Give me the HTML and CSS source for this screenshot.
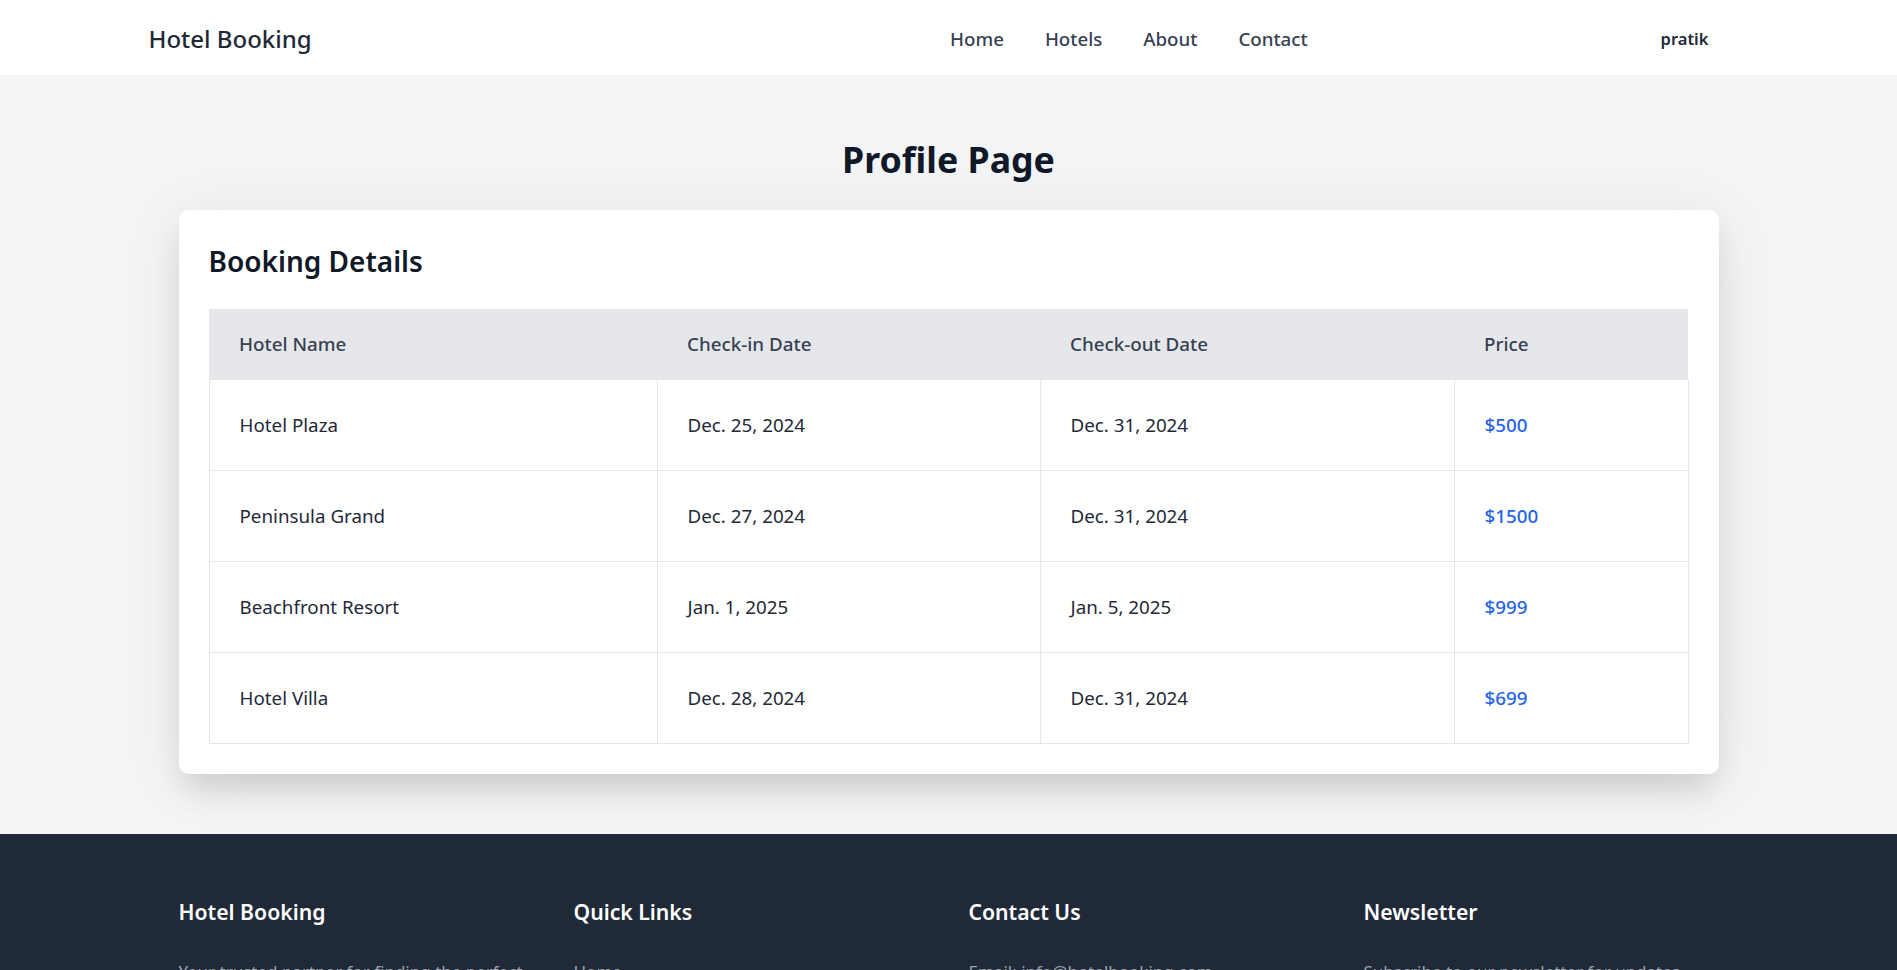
FILE: index.html
```html
<!DOCTYPE html>
<html lang="en">
<head>
<meta charset="utf-8">
<title>Profile Page</title>
<link rel="stylesheet" href="styles.css">
</head>
<body>
<header class="navbar">
  <div class="nav-inner">
    <a class="brand" href="#">Hotel Booking</a>
    <nav class="nav-links">
      <a href="#">Home</a>
      <a href="#">Hotels</a>
      <a href="#">About</a>
      <a href="#">Contact</a>
    </nav>
    <div class="nav-user">pratik</div>
  </div>
</header>

<main class="main">
  <div class="container">
    <h1 class="page-title">Profile Page</h1>
    <section class="card">
      <h2 class="card-title">Booking Details</h2>
      <table class="bookings">
        <colgroup>
          <col class="c1"><col class="c2"><col class="c3"><col class="c4">
        </colgroup>
        <thead>
          <tr><th>Hotel Name</th><th>Check-in Date</th><th>Check-out Date</th><th>Price</th></tr>
        </thead>
        <tbody>
          <tr><td>Hotel Plaza</td><td>Dec. 25, 2024</td><td>Dec. 31, 2024</td><td class="price">$500</td></tr>
          <tr><td>Peninsula Grand</td><td>Dec. 27, 2024</td><td>Dec. 31, 2024</td><td class="price">$1500</td></tr>
          <tr><td>Beachfront Resort</td><td>Jan. 1, 2025</td><td>Jan. 5, 2025</td><td class="price">$999</td></tr>
          <tr><td>Hotel Villa</td><td>Dec. 28, 2024</td><td>Dec. 31, 2024</td><td class="price">$699</td></tr>
        </tbody>
      </table>
    </section>
  </div>
</main>

<footer class="footer">
  <div class="container footer-grid">
    <div class="footer-col">
      <h3>Hotel Booking</h3>
      <p>Your trusted partner for finding the perfect stay.</p>
    </div>
    <div class="footer-col">
      <h3>Quick Links</h3>
      <p>Home</p>
    </div>
    <div class="footer-col">
      <h3>Contact Us</h3>
      <p>Email: info@hotelbooking.com</p>
    </div>
    <div class="footer-col">
      <h3>Newsletter</h3>
      <p>Subscribe to our newsletter for updates.</p>
    </div>
  </div>
</footer>
</body>
</html>
```

FILE: styles.css
```css
* { box-sizing: border-box; }

html, body {
  margin: 0;
  padding: 0;
}

body {
  font-family: "Noto Sans", "Open Sans", Arial, sans-serif;
  font-size: 18.8px;
  line-height: 30px;
  color: #1f2937;
  background: #f3f4f6;
}

a { text-decoration: none; color: inherit; }

.navbar {
  background: #ffffff;
  height: 75px;
}

.nav-inner {
  max-width: 1600px;
  margin: 0 auto;
  height: 100%;
  display: flex;
  align-items: center;
  padding-top: 2px;
}

.brand {
  font-size: 24px;
  font-weight: 500;
  color: #1f2937;
  line-height: 35px;
}

.nav-links {
  margin-left: auto;
  display: flex;
  gap: 41px;
}

.nav-links a {
  font-size: 18.7px;
  font-weight: 500;
  color: #374151;
}

.nav-user {
  margin-left: 353px;
  margin-right: 40px;
  font-size: 16.5px;
  font-weight: 600;
  color: #1f2937;
}

.main {
  padding: 60px 0 60px;
}

.container {
  max-width: 1600px;
  margin: 0 auto;
  padding: 0 30px;
}

.page-title {
  margin: 0 0 28px;
  text-align: center;
  font-size: 35.7px;
  line-height: 45px;
  font-weight: 700;
  color: #111827;
  padding-top: 2px;
}

.card {
  background: #ffffff;
  border-radius: 10px;
  padding: 31px 30px 30px;
  box-shadow: 0 20px 30px -6px rgba(0, 0, 0, 0.12), 0 8px 60px rgba(0, 0, 0, 0.08);
}

.card-title {
  margin: 0 0 28px;
  font-size: 28px;
  line-height: 40px;
  font-weight: 600;
  color: #111827;
}

.bookings {
  width: 100%;
  border-collapse: collapse;
  table-layout: fixed;
}

.c1 { width: 448px; }
.c2 { width: 383px; }
.c3 { width: 414px; }
.c4 { width: 234px; }

.bookings th {
  background: #e5e7eb;
  text-align: left;
  font-weight: 500;
  color: #374151;
  padding: 20px 30px;
  line-height: 30px;
}

.bookings td {
  border: 1px solid #e5e7eb;
  padding: 30px 30px 30px;
  height: 91px;
  line-height: 30px;
  color: #1f2937;
}

.bookings td.price {
  color: #2563eb;
  font-weight: 500;
}

.footer {
  background: #1f2937;
  color: #ffffff;
  padding: 60px 0 60px;
}

.footer-grid {
  display: grid;
  grid-template-columns: repeat(4, 1fr);
  gap: 40px;
}

.footer-col h3 {
  margin: 0 0 30px;
  font-size: 21.2px;
  line-height: 35px;
  font-weight: 600;
}

.footer-col p {
  margin: 0;
  font-size: 17px;
  line-height: 25px;
  color: #9ca3af;
}
```
